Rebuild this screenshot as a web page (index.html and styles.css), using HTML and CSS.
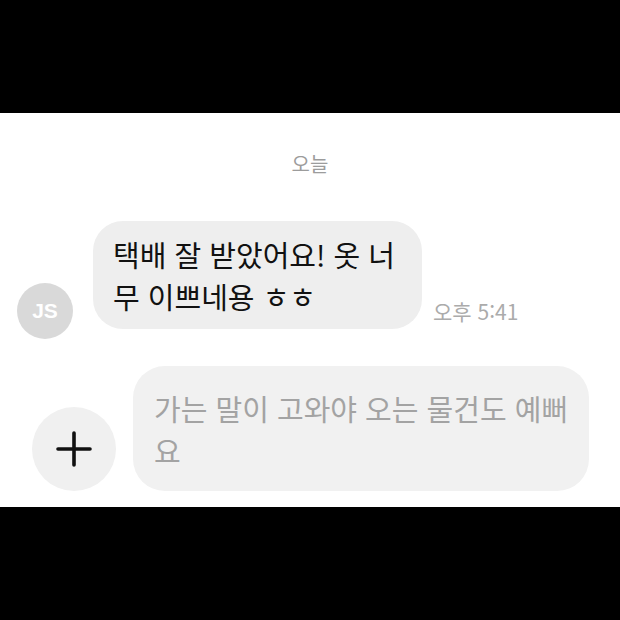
FILE: index.html
```html
<!DOCTYPE html>
<html lang="ko">
<head>
  <meta charset="UTF-8" />
  <meta name="viewport" content="width=device-width, initial-scale=1.0"/>
  <title>채팅</title>
  <link rel="stylesheet" href="styles.css">
</head>
<body>
  <main class="chat">
    <div class="date">오늘</div>

    <!-- 받은 메시지 -->
    <div class="msg-row">
      <div class="avatar">JS</div>
      <div class="bubble">택배 잘 받았어요! 옷 너무 이쁘네용 ㅎㅎ</div>
      <span class="time">오후 5:41</span>
    </div>

    <!-- 입력창 -->
    <div class="input-row">
      <button class="plus-btn" aria-label="추가">
        <svg width="36" height="36" viewBox="0 0 36 36">
          <path d="M18 2 V34 M2 18 H34" stroke="#111" stroke-width="3.6" stroke-linecap="round" fill="none"/>
        </svg>
      </button>
      <div class="input-box">가는 말이 고와야 오는 물건도 예뻐요</div>
    </div>
  </main>
</body>
</html>
```

FILE: styles.css
```css
* {
  box-sizing: border-box;
}

body {
  margin: 0;
  padding: 0;
  height: 620px;
  background-color: black;
  font-family: "Noto Sans CJK KR", "Noto Sans", sans-serif;
  display: flex;
  flex-direction: column;
  justify-content: center;
  overflow: hidden;
}

.chat {
  height: 394px;
  background: white;
  padding-top: 39px;
  display: flex;
  flex-direction: column;
}

.date {
  text-align: center;
  font-size: 20px;
  line-height: 24px;
  color: #9c9c9c;
}

.msg-row {
  display: flex;
  align-items: flex-end;
  margin-top: 45px;
  padding-left: 17px;
}

.avatar {
  width: 56px;
  height: 56px;
  border-radius: 50%;
  background: #d9d9d9;
  color: white;
  font-family: "Liberation Sans", Arial, sans-serif;
  font-weight: bold;
  font-size: 21px;
  display: flex;
  align-items: center;
  justify-content: center;
  flex-shrink: 0;
}

.bubble {
  width: 329px;
  margin-left: 20px;
  margin-bottom: 10px;
  padding: 12px 20px;
  background: #eeeeee;
  border-radius: 30px;
  font-size: 29px;
  line-height: 42px;
  color: #111;
}

.time {
  margin-left: 11px;
  margin-bottom: 16px;
  font-size: 21px;
  line-height: 24px;
  color: #ababab;
}

.input-row {
  display: flex;
  align-items: flex-end;
  margin-top: 27px;
  padding-left: 32px;
}

.plus-btn {
  width: 84px;
  height: 84px;
  border: none;
  border-radius: 50%;
  background: #f0f0f0;
  padding: 0;
  display: flex;
  align-items: center;
  justify-content: center;
  flex-shrink: 0;
}

.input-box {
  width: 456px;
  margin-left: 17px;
  padding: 21px 14px 20px 21px;
  background: #f1f1f1;
  border-radius: 32px;
  font-size: 29px;
  line-height: 42px;
  color: #a3a3a3;
}
```
